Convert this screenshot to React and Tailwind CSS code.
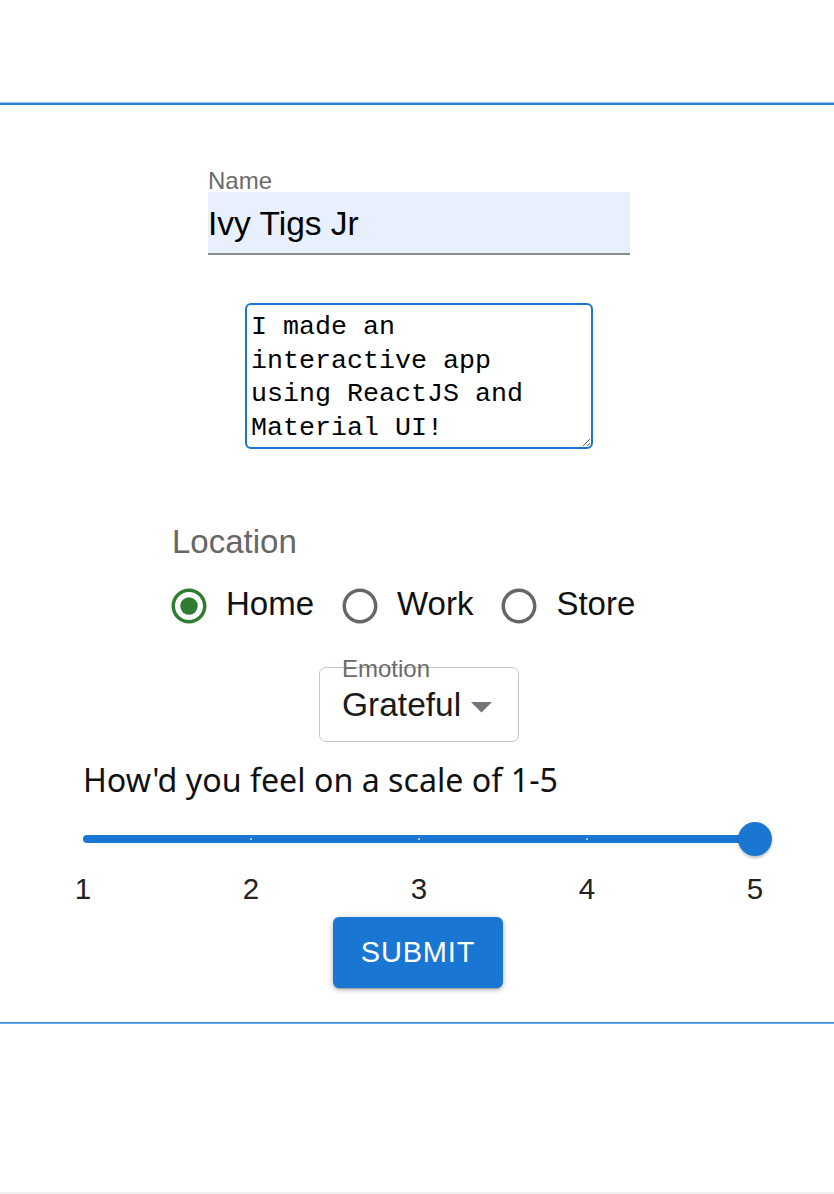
import React from "react";

const sans = { fontFamily: '"Liberation Sans", Arial, sans-serif' };

function RadioIcon({ checked }) {
  const color = checked ? "#2e7d32" : "#666666";
  return (
    <svg width="42" height="42" viewBox="0 0 24 24" className="shrink-0">
      <path
        fill={color}
        d="M12 2C6.48 2 2 6.48 2 12s4.48 10 10 10 10-4.48 10-10S17.52 2 12 2zm0 18c-4.42 0-8-3.58-8-8s3.58-8 8-8 8 3.58 8 8-3.58 8-8 8z"
      />
      {checked && <circle cx="12" cy="12" r="5" fill={color} />}
    </svg>
  );
}

function RadioItem({ label, checked, last }) {
  return (
    <label className={"flex items-center " + (last ? "" : "mr-[25px]")}>
      <RadioIcon checked={checked} />
      <span className="ml-[16px] mb-[4px] text-[33px] leading-[38px] text-[#111]">{label}</span>
    </label>
  );
}

export default function App() {
  return (
    <div className="w-[834px] h-[1194px] bg-white flex flex-col" style={sans}>
      <div className="h-[102px] shrink-0" />
      <div className="h-[1px] bg-[#9cc2ea] shrink-0" />
      <div className="h-[2px] bg-[#2a7fd6] shrink-0" />

      {/* Name field */}
      <div className="ml-[208px] w-[422px] mt-[64px] flex flex-col">
        <label className="text-[24px] leading-[23px] h-[23px] text-[#6b6b6b]">Name</label>
        <div className="h-[63px] box-border bg-[#e8f0fe] border-b-2 border-[#8e8e8e] pt-[13px]">
          <div className="text-[33.5px] leading-[38px] text-black">Ivy Tigs Jr</div>
        </div>
      </div>

      {/* Textarea */}
      <textarea
        className="ml-[245px] mt-[48px] w-[348px] h-[146px] box-border border-2 border-[#1976d2] rounded-[6px] pl-[4px] pr-[20px] pt-[6px] pb-0 text-[26.67px] leading-[33.7px] text-black outline-none overflow-hidden resize"
        style={{ fontFamily: '"Liberation Mono", "DejaVu Sans Mono", monospace' }}
        defaultValue="I made an interactive app using ReactJS and Material UI!"
      />

      {/* Location */}
      <div className="ml-[172px] mt-[74px] text-[33px] leading-[38px] text-[#666666]">Location</div>
      <div className="ml-[168px] mt-[24px] flex items-center h-[42px]">
        <RadioItem label="Home" checked />
        <RadioItem label="Work" />
        <RadioItem label="Store" last />
      </div>

      {/* Select */}
      <div className="ml-[319px] mt-[40px] w-[200px] h-[75px] box-border border border-[#c4c4c4] rounded-[7px] relative">
        <span className="absolute left-[22px] top-[-11px] text-[24px] leading-[24px] text-[#6b6b6b]">Emotion</span>
        <div className="flex items-start pl-[22px] pt-[18px]">
          <span className="text-[33.5px] leading-[38px] text-[#1a1a1a]">Grateful</span>
          <svg width="21" height="10.5" viewBox="7 10 10 5" className="ml-[10px] mt-[16px] shrink-0">
            <path d="M7 10l5 5 5-5z" fill="#757575" />
          </svg>
        </div>
      </div>

      {/* Slider question */}
      <div
        className="ml-[83px] mt-[18px] text-[32.2px] leading-[40px] text-[#111]"
        style={{ fontFamily: '"Noto Sans", "Open Sans", sans-serif' }}
      >
        How'd you feel on a scale of 1-5
      </div>

      {/* Slider */}
      <div className="ml-[83px] mt-[22px] w-[672px] h-[34px] relative">
        <div className="mt-[13px] h-[8px] rounded-full bg-[#1976d2]" />
        <span className="absolute left-[167px] top-[16px] w-[2px] h-[2px] rounded-full bg-[#cfe3f7]" />
        <span className="absolute left-[335px] top-[16px] w-[2px] h-[2px] rounded-full bg-[#cfe3f7]" />
        <span className="absolute left-[503px] top-[16px] w-[2px] h-[2px] rounded-full bg-[#cfe3f7]" />
        <span className="absolute right-[-17px] top-0 w-[34px] h-[34px] rounded-full bg-[#1976d2] shadow-[0_2px_3px_rgba(0,0,0,0.25)]" />
      </div>
      <div className="ml-[83px] mt-[16px] w-[672px] flex justify-between text-[29.5px] leading-[34px] text-[#222]">
        {["1", "2", "3", "4", "5"].map((n) => (
          <div key={n} className="w-0 flex justify-center whitespace-nowrap">
            {n}
          </div>
        ))}
      </div>

      {/* Submit */}
      <button className="ml-[333px] mt-[11px] w-[170px] h-[71px] rounded-[6px] bg-[#1976d2] text-white text-[29px] tracking-[0.8px] flex items-center justify-center shadow-[0_3px_1px_-2px_rgba(0,0,0,0.2),0_2px_4px_0_rgba(0,0,0,0.2),0_1px_8px_0_rgba(0,0,0,0.12)]">
        SUBMIT
      </button>

      <div className="mt-[34px] h-[1px] bg-[#3f8ad8] shrink-0" />
      <div className="h-[1px] bg-[#6aaae8] shrink-0" />
      <div className="flex-1" />
      <div className="h-[2px] bg-[#f0f0f0] shrink-0" />
    </div>
  );
}
